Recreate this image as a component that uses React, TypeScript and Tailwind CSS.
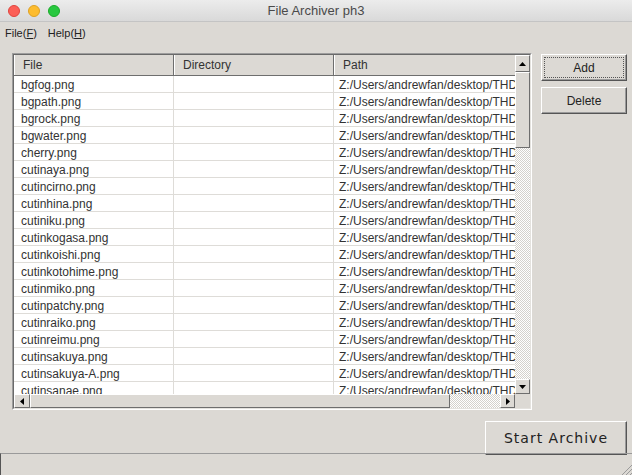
import React from "react";

const files = [
  "bgfog.png",
  "bgpath.png",
  "bgrock.png",
  "bgwater.png",
  "cherry.png",
  "cutinaya.png",
  "cutincirno.png",
  "cutinhina.png",
  "cutiniku.png",
  "cutinkogasa.png",
  "cutinkoishi.png",
  "cutinkotohime.png",
  "cutinmiko.png",
  "cutinpatchy.png",
  "cutinraiko.png",
  "cutinreimu.png",
  "cutinsakuya.png",
  "cutinsakuya-A.png",
  "cutinsanae.png",
];

const bevel =
  "bg-[#dcd9d4] border border-t-white border-l-white border-b-[#6e6e6e] border-r-[#6e6e6e]";

function Arrow({ dir }: { dir: "up" | "down" | "left" | "right" }) {
  const pts = {
    up: "0,4 7,4 3.5,0",
    down: "0,0 7,0 3.5,4",
    left: "4,0 4,7 0,3.5",
    right: "0,0 0,7 4,3.5",
  }[dir];
  const vertical = dir === "up" || dir === "down";
  return (
    <svg width={vertical ? 7 : 4} height={vertical ? 4 : 7}>
      <polygon points={pts} fill="#000" />
    </svg>
  );
}

const dither =
  "bg-[repeating-conic-gradient(#ffffff_0_25%,#d4d1cc_0_50%)] bg-[length:2px_2px]";

export default function App() {
  return (
    <div
      className="w-[632px] h-[475px] bg-[#dcd9d4] flex flex-col overflow-hidden text-[#333]"
      style={{ fontFamily: '"Liberation Sans", Arial, sans-serif' }}
    >
      {/* title bar */}
      <div className="h-[22px] shrink-0 relative flex items-center justify-center bg-gradient-to-b from-[#ececec] to-[#d9d9d9] border-b border-[#c4c4c4]">
        <div className="absolute left-[8px] top-[5px] flex gap-[8px]">
          <span className="w-[12px] h-[12px] rounded-full bg-[#fc5f57] border border-[#e0443e]" />
          <span className="w-[12px] h-[12px] rounded-full bg-[#fdbc2e] border border-[#dea123]" />
          <span className="w-[12px] h-[12px] rounded-full bg-[#28c840] border border-[#1aab29]" />
        </div>
        <span className="text-[13px] text-[#4a4a4a]">File Archiver ph3</span>
      </div>

      {/* menu bar */}
      <div className="h-[22px] shrink-0 flex items-center gap-[11px] pl-[5px] text-[11px] text-[#222]">
        <span>
          File(<span className="underline">F</span>)
        </span>
        <span>
          Help(<span className="underline">H</span>)
        </span>
      </div>

      {/* main */}
      <div className="flex mt-[9px]">
        <div className="ml-[12px] w-[520px] h-[357px] border border-t-[#9d9d9d] border-l-[#9d9d9d] border-b-white border-r-white">
          <div className="w-full h-full border border-t-[#6a6a6a] border-l-[#6a6a6a] border-b-[#e4e2de] border-r-[#e4e2de] grid grid-cols-[1fr_15px] grid-rows-[1fr_14px]">
            {/* viewport */}
            <div className="overflow-hidden bg-white text-[12px]">
              <div className="w-[600px]">
                <div className="flex h-[21px] bg-[#dcd9d4] border-b border-[#6e6e6e]">
                  <div className="w-[160px] shrink-0 pl-[8px] flex items-center border-l border-white border-r border-r-[#6e6e6e]">
                    File
                  </div>
                  <div className="w-[160px] shrink-0 pl-[8px] flex items-center border-l border-white border-r border-r-[#6e6e6e]">
                    Directory
                  </div>
                  <div className="w-[280px] shrink-0 pl-[8px] flex items-center border-l border-white">
                    Path
                  </div>
                </div>
                {files.map((f) => (
                  <div key={f} className="flex h-[17px] border-b border-[#dedcd8]">
                    <div className="w-[160px] shrink-0 pl-[7px] pt-[2px] flex items-center border-r border-[#dedcd8] whitespace-nowrap overflow-hidden">
                      {f}
                    </div>
                    <div className="w-[160px] shrink-0 border-r border-[#dedcd8]" />
                    <div className="w-[280px] shrink-0 pl-[5px] pt-[2px] flex items-center whitespace-nowrap overflow-hidden">
                      Z:/Users/andrewfan/desktop/THDESK/image/{f}
                    </div>
                  </div>
                ))}
              </div>
            </div>

            {/* vertical scrollbar */}
            <div className={`flex flex-col ${dither}`}>
              <div className={`h-[17px] flex items-center justify-center ${bevel}`}>
                <Arrow dir="up" />
              </div>
              <div className={`h-[76px] ${bevel}`} />
              <div className="flex-1" />
              <div className={`h-[15px] flex items-center justify-center ${bevel}`}>
                <Arrow dir="down" />
              </div>
            </div>

            {/* horizontal scrollbar */}
            <div className={`flex ${dither}`}>
              <div className={`w-[16px] flex items-center justify-center ${bevel}`}>
                <Arrow dir="left" />
              </div>
              <div className={`w-[420px] ${bevel}`} />
              <div className="flex-1" />
              <div className={`w-[15px] flex items-center justify-center ${bevel}`}>
                <Arrow dir="right" />
              </div>
            </div>
            <div className="bg-[#dcd9d4]" />
          </div>
        </div>

        {/* side buttons */}
        <div className="ml-[9px] mt-[1px] flex flex-col gap-[6px] text-[12px] text-[#222]">
          <button className="w-[86px] h-[27px] p-[2px] border border-t-white border-l-white border-b-[#555] border-r-[#555] bg-[#dcd9d4] shadow-[inset_-1px_-1px_0_#9a9a9a]">
            <span className="flex h-full w-full items-center justify-center border border-dotted border-[#555]">
              Add
            </span>
          </button>
          <button className="w-[86px] h-[27px] flex items-center justify-center border border-t-white border-l-white border-b-[#555] border-r-[#555] bg-[#dcd9d4] shadow-[inset_-1px_-1px_0_#9a9a9a]">
            Delete
          </button>
        </div>
      </div>

      {/* bottom */}
      <div className="flex justify-end mt-[11px] pr-[5px]">
        <button
          className="w-[142px] h-[34px] flex items-center justify-center border border-t-white border-l-white border-b-[#555] border-r-[#555] bg-[#dcd9d4] shadow-[inset_-1px_-1px_0_#9a9a9a] text-[14px] tracking-[1px] text-[#222]"
          style={{ fontFamily: '"DejaVu Sans", Verdana, sans-serif' }}
        >
          Start Archive
        </button>
      </div>

      {/* status bar */}
      <div className="relative flex-1 -mt-[2px] border-t border-[#9a9a9a] border-l border-l-[#555]">
        <svg className="absolute right-0 bottom-0" width="12" height="12">
          <line x1="12" y1="2" x2="2" y2="12" stroke="#9a9a9a" />
          <line x1="12" y1="6" x2="6" y2="12" stroke="#9a9a9a" />
          <line x1="12" y1="10" x2="10" y2="12" stroke="#9a9a9a" />
        </svg>
      </div>
    </div>
  );
}
